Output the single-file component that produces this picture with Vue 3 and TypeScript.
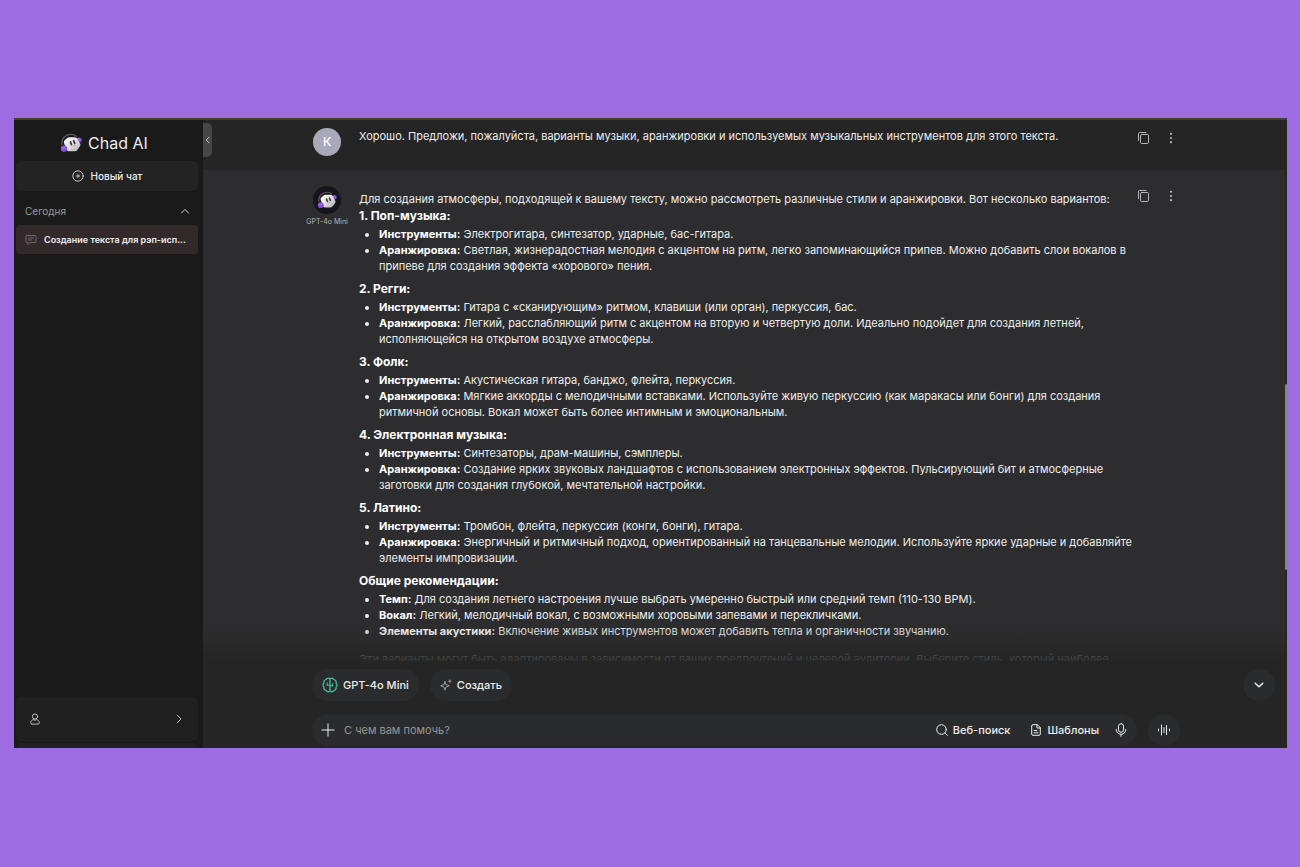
<script setup lang="ts">
interface Point {
  label: string
  text: string
}

interface Section {
  title: string
  points: Point[]
}

const intro =
  'Для создания атмосферы, подходящей к вашему тексту, можно рассмотреть различные стили и аранжировки. Вот несколько вариантов:'

const sections: Section[] = [
  {
    title: '1. Поп-музыка:',
    points: [
      { label: 'Инструменты:', text: 'Электрогитара, синтезатор, ударные, бас-гитара.' },
      {
        label: 'Аранжировка:',
        text: 'Светлая, жизнерадостная мелодия с акцентом на ритм, легко запоминающийся припев. Можно добавить слои вокалов в припеве для создания эффекта «хорового» пения.',
      },
    ],
  },
  {
    title: '2. Регги:',
    points: [
      { label: 'Инструменты:', text: 'Гитара с «сканирующим» ритмом, клавиши (или орган), перкуссия, бас.' },
      {
        label: 'Аранжировка:',
        text: 'Легкий, расслабляющий ритм с акцентом на вторую и четвертую доли. Идеально подойдет для создания летней, исполняющейся на открытом воздухе атмосферы.',
      },
    ],
  },
  {
    title: '3. Фолк:',
    points: [
      { label: 'Инструменты:', text: 'Акустическая гитара, банджо, флейта, перкуссия.' },
      {
        label: 'Аранжировка:',
        text: 'Мягкие аккорды с мелодичными вставками. Используйте живую перкуссию (как маракасы или бонги) для создания ритмичной основы. Вокал может быть более интимным и эмоциональным.',
      },
    ],
  },
  {
    title: '4. Электронная музыка:',
    points: [
      { label: 'Инструменты:', text: 'Синтезаторы, драм-машины, сэмплеры.' },
      {
        label: 'Аранжировка:',
        text: 'Создание ярких звуковых ландшафтов с использованием электронных эффектов. Пульсирующий бит и атмосферные заготовки для создания глубокой, мечтательной настройки.',
      },
    ],
  },
  {
    title: '5. Латино:',
    points: [
      { label: 'Инструменты:', text: 'Тромбон, флейта, перкуссия (конги, бонги), гитара.' },
      {
        label: 'Аранжировка:',
        text: 'Энергичный и ритмичный подход, ориентированный на танцевальные мелодии. Используйте яркие ударные и добавляйте элементы импровизации.',
      },
    ],
  },
  {
    title: 'Общие рекомендации:',
    points: [
      {
        label: 'Темп:',
        text: 'Для создания летнего настроения лучше выбрать умеренно быстрый или средний темп (110-130 BPM).',
      },
      { label: 'Вокал:', text: 'Легкий, мелодичный вокал, с возможными хоровыми запевами и перекличками.' },
      {
        label: 'Элементы акустики:',
        text: 'Включение живых инструментов может добавить тепла и органичности звучанию.',
      },
    ],
  },
]

const outro =
  'Эти варианты могут быть адаптированы в зависимости от ваших предпочтений и целевой аудитории. Выберите стиль, который наиболее'
</script>

<template>
  <div class="page">
    <svg class="defs" aria-hidden="true">
      <defs>
        <linearGradient id="face" x1="0" y1="0" x2="1" y2="1">
          <stop offset="0" stop-color="#ffffff" />
          <stop offset="0.5" stop-color="#e2e0df" />
          <stop offset="1" stop-color="#a9a7ae" />
        </linearGradient>
        <radialGradient id="pad" cx="0.45" cy="0.35" r="0.7">
          <stop offset="0" stop-color="#a26cf0" />
          <stop offset="1" stop-color="#6a3dc4" />
        </radialGradient>
        <symbol id="robot" viewBox="0 0 22 20">
          <path d="M2 12C1 6 5 1.500 11 1.400c2.200 0 4 .7 5.500 2" fill="none" stroke="#57565b" stroke-width="1.300" />
          <circle cx="19.200" cy="7" r="2.600" fill="url(#pad)" />
          <path d="M9 4.300 15 4.300q1.500.1 2.200 1.300l3 5.200q.7 1.300-.2 2.500l-2.600 3.700q-.9 1.200-2.400 1.200l-6.500.1q-1.400-.1-1.900-1.500L4 9.900q-.5-1.500.6-2.600l2.700-2.400q.7-.6 1.700-.6z" fill="url(#face)" />
          <path d="M10.500 9l1 2.600M13.700 7.800l1 2.600" stroke="#3b3944" stroke-width="1.800" stroke-linecap="round" />
          <path d="M13.200 13.200l1.600-.6" stroke="#77747f" stroke-width=".7" />
          <circle cx="4" cy="15.800" r="3.200" fill="url(#pad)" />
        </symbol>
        <symbol id="copy" viewBox="0 0 14 14">
          <path d="M1.500 9.500V2.500q0-1 1-1h6.500" />
          <rect x="3.500" y="3.500" width="8" height="9" rx="1.200" />
        </symbol>
      </defs>
    </svg>

    <div class="window">
      <aside class="sidebar">
        <div class="brand">
          <svg class="brand-logo" aria-hidden="true"><use href="#robot" /></svg>
          <span>Chad AI</span>
        </div>
        <button class="new-chat" type="button">
          <svg class="line" width="12" height="12" viewBox="0 0 12 12" aria-hidden="true">
            <circle cx="6" cy="6" r="5.200" />
            <path d="M6 4.300v3.400M4.300 6h3.400" />
          </svg>
          Новый чат
        </button>
        <button class="group" type="button">
          Сегодня
          <svg class="line" width="10" height="10" viewBox="0 0 10 10" aria-hidden="true">
            <path d="M1.500 7 5 3.400 8.500 7" />
          </svg>
        </button>
        <button class="chat-item" type="button">
          <svg class="line" width="12" height="12" viewBox="0 0 12 12" aria-hidden="true">
            <path d="M2 1.500h8q1 0 1 1v5q0 1-1 1H5L2.800 10.500V8.500H2q-1 0-1-1v-5q0-1 1-1zM3.500 4h5M3.500 6h3" />
          </svg>
          <span>Создание текста для рэп-исп...</span>
        </button>
        <div class="sidebar-foot">
          <button class="account" type="button" aria-label="Профиль">
            <svg class="line" width="12" height="12" viewBox="0 0 12 12" aria-hidden="true">
              <circle cx="6" cy="3.500" r="2.600" />
              <path d="M4.300 6.600C2.600 7.200 1.700 8.400 1.700 9.800q0 1.300 1.300 1.300h6q1.300 0 1.300-1.300c0-1.400-.9-2.600-2.600-3.200-1 .8-2.400.8-3.400 0z" />
            </svg>
            <svg class="line" width="10" height="10" viewBox="0 0 10 10" aria-hidden="true">
              <path d="M3.200 1.200 7 5 3.200 8.800" />
            </svg>
          </button>
          <div class="next-card"></div>
        </div>
      </aside>

      <main class="main">
        <button class="collapse" type="button" aria-label="Свернуть панель">
          <svg class="line" width="6" height="8" viewBox="0 0 6 8" aria-hidden="true">
            <path d="M4 1.200 1.300 4 4 6.800" />
          </svg>
        </button>

        <div class="thread">
          <section class="message user">
            <div class="column">
              <div class="author"><span class="avatar initial">К</span></div>
              <p class="body">
                Хорошо. Предложи, пожалуйста, варианты музыки, аранжировки и используемых музыкальных инструментов для
                этого текста.
              </p>
              <div class="actions">
                <button type="button" aria-label="Копировать">
                  <svg class="line" width="14" height="14"><use href="#copy" /></svg>
                </button>
                <button type="button" aria-label="Ещё">
                  <svg width="4" height="12" viewBox="0 0 4 12" fill="currentColor">
                    <circle cx="2" cy="1.800" r="1.100" /><circle cx="2" cy="6" r="1.100" /><circle cx="2" cy="10.200" r="1.100" />
                  </svg>
                </button>
              </div>
            </div>
          </section>

          <section class="message answer">
            <div class="column">
              <div class="author">
                <span class="avatar bot"><svg aria-hidden="true"><use href="#robot" /></svg></span>
                <span class="model-name">GPT-4o Mini</span>
              </div>
              <div class="body">
                <p>{{ intro }}</p>
                <template v-for="section in sections" :key="section.title">
                  <h3>{{ section.title }}</h3>
                  <ul>
                    <li v-for="point in section.points" :key="point.label">
                      <strong>{{ point.label }}</strong> {{ point.text }}
                    </li>
                  </ul>
                </template>
                <p class="outro">{{ outro }}</p>
              </div>
              <div class="actions">
                <button type="button" aria-label="Копировать">
                  <svg class="line" width="14" height="14"><use href="#copy" /></svg>
                </button>
                <button type="button" aria-label="Ещё">
                  <svg width="4" height="12" viewBox="0 0 4 12" fill="currentColor">
                    <circle cx="2" cy="1.800" r="1.100" /><circle cx="2" cy="6" r="1.100" /><circle cx="2" cy="10.200" r="1.100" />
                  </svg>
                </button>
              </div>
            </div>
          </section>
          <div class="fade"></div>
        </div>

        <div class="composer">
          <div class="tools">
            <button class="pill" type="button">
              <svg class="brain" width="16" height="16" viewBox="0 0 16 16" aria-hidden="true">
                <path d="M8 2v12M8 2.200C7.200.7 4.900.8 4.300 2.500 2.400 2.700 1.600 4.200 2 5.700.7 6.800.7 9.200 2 10.300c-.4 1.500.4 3 2.300 3.200.6 1.700 2.900 1.800 3.700.3M8 2.200C8.800.7 11.100.8 11.700 2.500c1.900.2 2.700 1.700 2.300 3.200 1.300 1.100 1.300 3.500 0 4.600.4 1.500-.4 3-2.300 3.200-.6 1.700-2.900 1.800-3.700.3" />
                <path d="M5.200 5.800v2.400M5.200 8.200H8M8 8.800h2.600M10.700 6.500v2.300" stroke-width="1" />
              </svg>
              GPT-4o Mini
            </button>
            <button class="pill create" type="button">
              <svg class="line" width="12" height="12" viewBox="0 0 12 12" aria-hidden="true">
                <path d="M5 2.500 6 5.600 9.300 6.800 6 8 5 11.200 3.900 8 .7 6.800 3.900 5.600zM9.800 1v2.400M8.600 2.200H11" />
              </svg>
              Создать
            </button>
          </div>
          <button class="round down" type="button" aria-label="Вниз">
            <svg class="line" width="10" height="10" viewBox="0 0 10 10" aria-hidden="true">
              <path d="M1.200 3.200 5 6.800l3.800-3.600" />
            </svg>
          </button>
          <form class="prompt" @submit.prevent>
            <div class="field">
              <button type="button" aria-label="Прикрепить">
                <svg class="line" width="14" height="14" viewBox="0 0 14 14" aria-hidden="true">
                  <path d="M7 1v12M1 7h12" />
                </svg>
              </button>
              <input type="text" aria-label="Сообщение" placeholder="С чем вам помочь?" />
              <button class="search" type="button">
                <svg class="line" width="12" height="12" viewBox="0 0 12 12" aria-hidden="true">
                  <circle cx="5.500" cy="5.500" r="4.800" />
                  <path d="m9 9 2.400 2.400" />
                </svg>
                Веб-поиск
              </button>
              <button class="templates" type="button">
                <svg class="line" width="12" height="12" viewBox="0 0 12 12" aria-hidden="true">
                  <path d="M7 .7H3Q1.700.7 1.700 2v8q0 1.300 1.300 1.300h6q1.300 0 1.300-1.300V4zV4h3.300M4 6.500h3M4 8.800h4" />
                </svg>
                Шаблоны
              </button>
              <button type="button" aria-label="Голосовой ввод">
                <svg class="line" width="12" height="14" viewBox="0 0 12 14" aria-hidden="true">
                  <rect x="3.500" y=".7" width="5" height="8.600" rx="2.500" />
                  <path d="M1.200 6.500c0 6.500 9.600 6.500 9.600 0M6 11.400v2" />
                </svg>
              </button>
            </div>
            <button class="round" type="button" aria-label="Голосовой режим">
              <svg class="line" width="14" height="12" viewBox="0 0 14 12" aria-hidden="true">
                <path d="M1.500 5v2M4.500 1v10M7 3.500v5M9.500 1.500v9M12.500 5v2" />
              </svg>
            </button>
          </form>
        </div>
        <div class="scrollbar"></div>
      </main>
    </div>
  </div>
</template>

<style>
body {
  margin: 0;
  background: #9e6de2;
}
</style>

<style scoped>
.page {
  box-sizing: border-box;
  display: flex;
  height: 100vh;
  padding: 118px 13px 119px 14px;
  background: #9e6de2;
  color: #ededed;
  font: 11px/16px Inter, "Noto Sans", sans-serif;
}

.defs {
  position: absolute;
  width: 0;
  height: 0;
}

button {
  display: flex;
  align-items: center;
  padding: 0;
  border: 0;
  background: none;
  color: inherit;
  font: inherit;
  cursor: pointer;
}

svg {
  flex: none;
}

.line {
  fill: none;
  stroke: currentColor;
  stroke-width: 1;
  stroke-linecap: round;
  stroke-linejoin: round;
}

.window {
  display: flex;
  flex: 1;
  min-width: 0;
  overflow: hidden;
  border-top: 2px solid #3d422f;
  background: #252525;
}

.sidebar {
  box-sizing: border-box;
  display: flex;
  flex: 0 0 189px;
  flex-direction: column;
  min-width: 0;
  padding: 5px 5px 0 2px;
  background: #1a1a1a;
}

.brand {
  display: flex;
  align-items: center;
  justify-content: center;
  gap: 6px;
  height: 36px;
  margin-right: 6px;
  font-size: 16px;
}

.brand-logo {
  width: 22px;
  height: 20px;
}

.new-chat {
  justify-content: center;
  gap: 7px;
  height: 30px;
  border-radius: 5px;
  background: #232323;
  font-size: 10px;
  font-weight: 500;
}

.new-chat svg {
  color: #c4c4c4;
}

.group {
  justify-content: space-between;
  height: 34px;
  padding: 6px 8px 0 9px;
  color: #9a9a9a;
  font-size: 10px;
}

.group svg {
  color: #d0d0d0;
}

.chat-item {
  gap: 7px;
  height: 29px;
  padding: 0 9px;
  border-radius: 4px;
  background: #322a2a;
  font-size: 9px;
  font-weight: 600;
  white-space: nowrap;
}

.chat-item svg {
  color: #6f6666;
}

.sidebar-foot {
  display: flex;
  flex-direction: column;
  gap: 2px;
  margin-top: auto;
}

.account {
  justify-content: space-between;
  height: 44px;
  padding: 0 14px 0 13px;
  border-radius: 5px;
  background: #202020;
  color: #bdbdbd;
}

.next-card {
  height: 5px;
  border-radius: 5px 5px 0 0;
  background: #202020;
}

.main {
  position: relative;
  display: flex;
  flex: 1;
  flex-direction: column;
  min-width: 0;
}

.collapse {
  position: absolute;
  z-index: 1;
  top: 3px;
  left: 0;
  justify-content: center;
  width: 9px;
  height: 34px;
  border-radius: 0 5px 5px 0;
  background: #464646;
  color: #c8c8c8;
}

.thread {
  position: relative;
  flex: 1;
  min-height: 0;
  margin-right: 2px;
  overflow: hidden;
}

.message {
  padding: 8px 24px 0 26px;
}

.user {
  height: 42px;
}

.answer {
  padding-top: 16px;
  background: #2d2d2f;
}

.column,
.tools,
.prompt {
  display: flex;
  max-width: 868px;
  margin: 0 auto;
}

.column {
  align-items: flex-start;
}

.author {
  display: flex;
  flex: 0 0 32px;
  flex-direction: column;
  align-items: center;
  width: 32px;
  min-width: 0;
  margin-right: 16px;
}

.avatar {
  display: flex;
  align-items: center;
  justify-content: center;
  width: 28px;
  height: 28px;
  border-radius: 50%;
}

.initial {
  background: #aaa8bb;
  color: #fff;
  font-size: 12px;
  font-weight: 500;
}

.bot {
  background: #16151b;
}

.bot svg {
  width: 20px;
  height: 18px;
}

.model-name {
  color: #b4b4b4;
  font-size: 7px;
  line-height: 16px;
  white-space: nowrap;
}

.body {
  flex: 1;
  min-width: 0;
  margin: 0;
}

.answer .body {
  padding-top: 5px;
}

.body p {
  margin: 0;
}

.body h3 {
  margin: 0 0 1px;
  color: #fff;
  font-size: 12px;
  font-weight: 700;
  line-height: 18px;
}

.body ul {
  margin: 0 0 6px;
  padding-left: 20px;
}

.body strong {
  color: #fff;
  font-weight: 700;
}

.body .outro {
  padding: 6px 0 16px;
}

.actions {
  display: flex;
  gap: 18px;
  padding: 2px 6px 0 0;
  color: #b8b8b8;
}

.actions button {
  height: 16px;
}

.fade {
  position: absolute;
  right: 0;
  bottom: 0;
  left: 0;
  height: 40px;
  background: linear-gradient(rgba(37, 37, 37, 0), rgba(37, 37, 37, 0.2) 40%, rgba(37, 37, 37, 0.8) 80%, rgba(37, 37, 37, 0.92));
  pointer-events: none;
}

.composer {
  position: relative;
  padding: 8px 24px 2px 26px;
}

.pill,
.round,
.field {
  height: 32px;
  border-radius: 16px;
  background: #2a2b2c;
}

.tools {
  gap: 11px;
  margin-bottom: 13px;
}

.pill {
  gap: 5px;
  padding: 0 10px;
  font-weight: 500;
}

.brain {
  fill: none;
  stroke: #3fc79a;
  stroke-width: 1.25;
  stroke-linecap: round;
  stroke-linejoin: round;
}

.create svg {
  color: #9a9a9a;
}

.round {
  flex: none;
  justify-content: center;
  width: 32px;
}

.down {
  position: absolute;
  top: 8px;
  right: 12px;
}

.down svg {
  stroke-width: 1.5;
}

.prompt {
  gap: 11px;
}

.field {
  display: flex;
  flex: 1;
  align-items: center;
  min-width: 0;
  padding: 0 10px 0 9px;
  font-weight: 500;
}

.field input {
  flex: 1;
  min-width: 0;
  margin: 0 9px;
  padding: 0;
  border: 0;
  outline: 0;
  background: none;
  color: inherit;
  font: inherit;
  font-weight: 400;
}

.field input::placeholder {
  color: #969696;
  opacity: 1;
}

.search {
  gap: 5px;
}

.templates {
  gap: 5px;
  margin: 0 16px 0 20px;
}

.scrollbar {
  position: absolute;
  top: 264px;
  right: 0;
  width: 2px;
  height: 186px;
  border-radius: 1px;
  background: #858585;
}
</style>
